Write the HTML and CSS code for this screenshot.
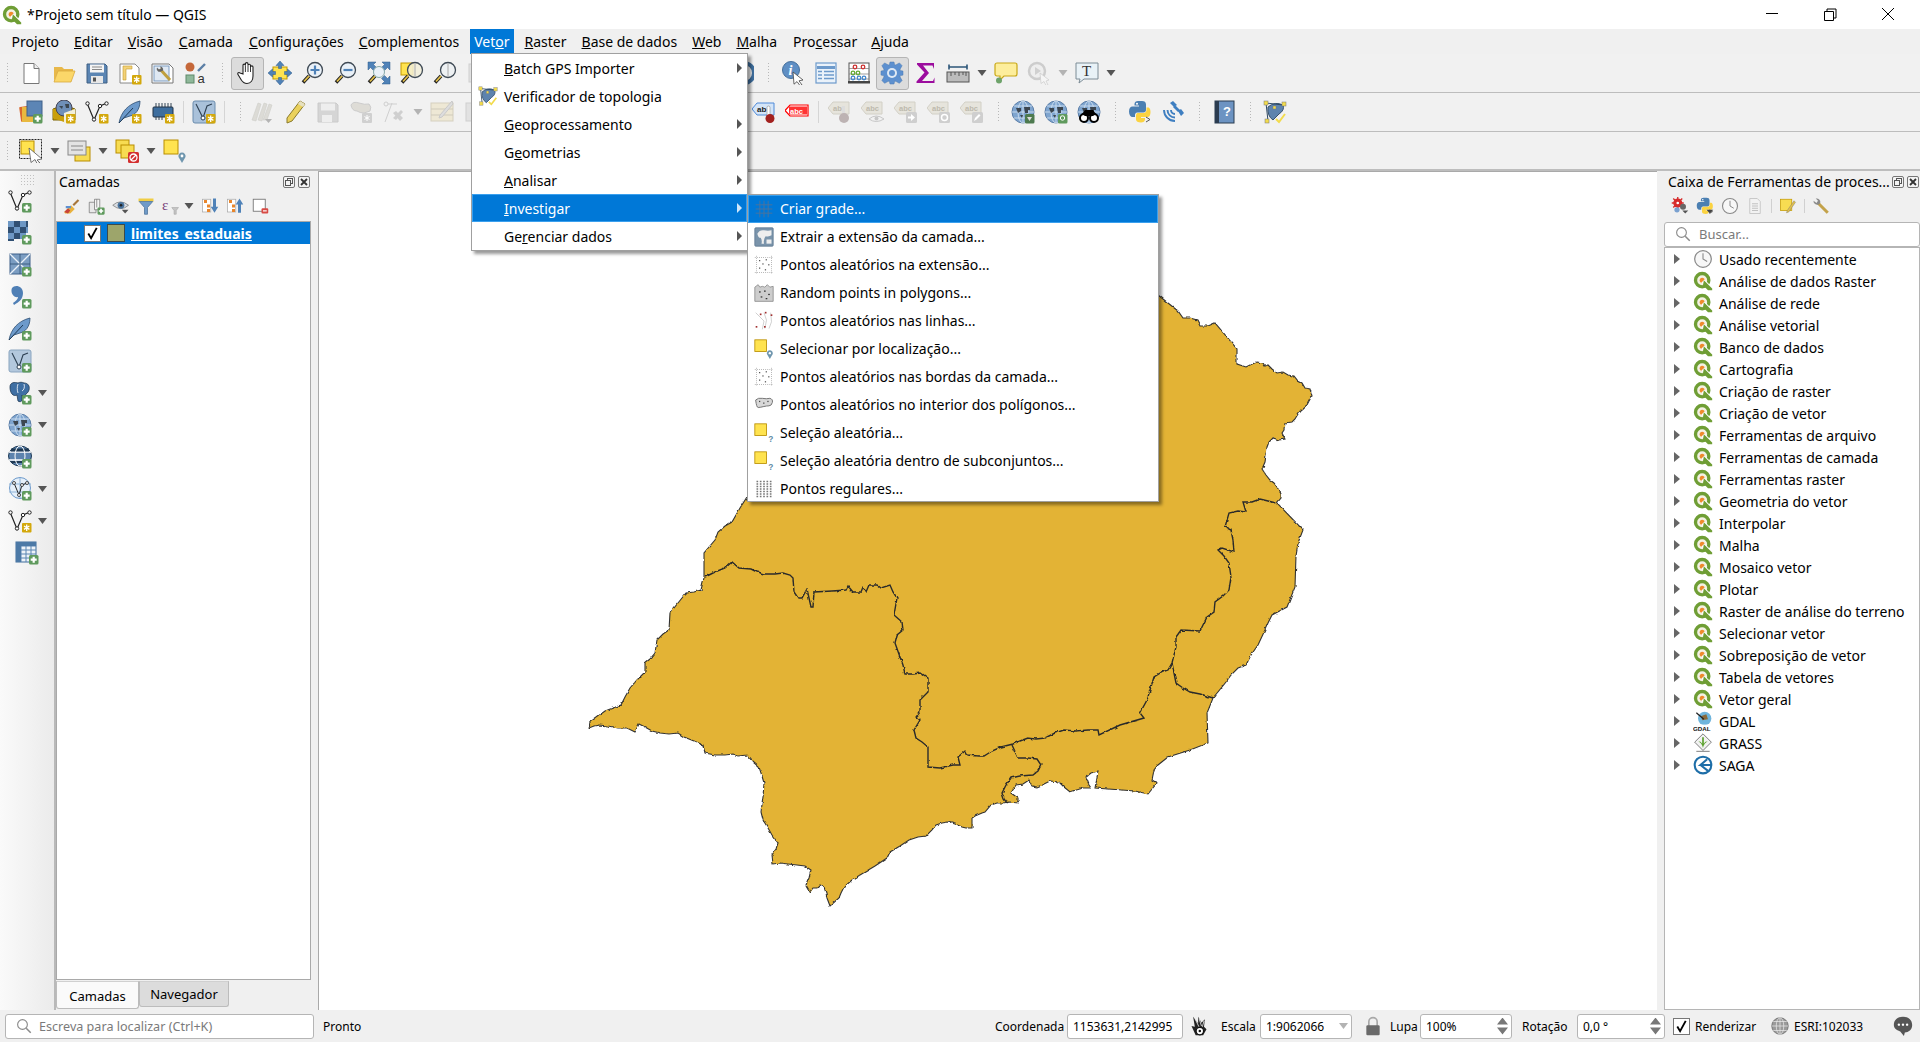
FILE: index.html
```html
<!DOCTYPE html>
<html lang="pt">
<head>
<meta charset="utf-8">
<title>*Projeto sem título — QGIS</title>
<link rel="stylesheet" href="styles.css">
</head>
<body>
<svg class="sprite" width="0" height="0">
<defs>
<symbol id="b-plus" viewBox="0 0 24 24"><rect x="14" y="14" width="9.5" height="9.5" rx="1.5" fill="#5f9a5d"/><path d="M18.7 15.7v6M15.7 18.7h6" stroke="#fff" stroke-width="2.2"/></symbol>
<symbol id="b-star" viewBox="0 0 24 24"><rect x="14" y="14" width="9.5" height="9.5" rx="1" fill="#d3a80c"/><path d="M18.7 15.5v6.4M16 17l5.4 3.4M21.4 17 16 20.4" stroke="#fff" stroke-width="1.3"/></symbol>
<symbol id="qgis" viewBox="0 0 24 24"><circle cx="11" cy="11" r="8" fill="#f3f1e4" stroke="#6f9e35" stroke-width="4"/><circle cx="11" cy="11" r="3" fill="#ee8a2c"/><path d="M12 12l9 9" stroke="#fff" stroke-width="5"/><path d="M13 11l10 10v2h-5l-6-6z" fill="#6f9e35"/></symbol>
<symbol id="new" viewBox="0 0 24 24"><path d="M5 2.5h10l5 5v15H5z" fill="#fff" stroke="#777"/><path d="M15 2.5v5h5" fill="#eee" stroke="#777"/></symbol>
<symbol id="open" viewBox="0 0 24 24"><path d="M2 6h8l2 2h9v3H6L2 20z" fill="#e8b84a"/><path d="M6 10h17l-4 11H2z" fill="#fbd769" stroke="#d9a93d" stroke-width=".8"/></symbol>
<symbol id="save" viewBox="0 0 24 24"><path d="M2 3h18l2 2v17H2z" fill="#5b85b3" stroke="#3f5f82"/><rect x="5" y="3.5" width="14" height="8" fill="#f4f4f4"/><path d="M7 6h10M7 8.500h10" stroke="#888"/><rect x="6" y="15" width="12" height="7" fill="#e8e8e8"/><rect x="8" y="16.500" width="3" height="4" fill="#555"/></symbol>
<symbol id="layoutnew" viewBox="0 0 24 24"><path d="M2 3h15l4 4v15H2z" fill="#fff" stroke="#888"/><path d="M5 5h9v3H8v11H5z" fill="#f3d27a" stroke="#c49a2c" stroke-width=".6"/><use href="#b-star"/></symbol>
<symbol id="layoutmgr" viewBox="0 0 24 24"><path d="M1 3h17l4 4v15H1z" fill="#fff" stroke="#777"/><rect x="3" y="5" width="15" height="15" fill="#dfe8f2" stroke="#7d9cc0"/><path d="M9 8l10 11" stroke="#bf9f3e" stroke-width="3"/><path d="M6 6.500a3 3 0 0 0 4 4l2-1a3 3 0 0 0-3-4l1 2-2 1z" fill="#666"/></symbol>
<symbol id="style" viewBox="0 0 24 24"><circle cx="6" cy="6" r="4.500" fill="#c5683a"/><path d="M14 10l7-7" stroke="#5c7fa6" stroke-width="2.400"/><rect x="2" y="14" width="8" height="8" fill="#8fb89a" stroke="#5f8a6a"/><text x="13.500" y="22" class="svgt">a</text></symbol>
<symbol id="pan" viewBox="0 0 24 24"><path d="M8 13V4.500c0-1.800 2.400-1.800 2.400 0V3c0-1.800 2.600-1.800 2.600 0v1.500c0-1.700 2.500-1.700 2.500 0V6c0-1.500 2.500-1.500 2.500 0v9c0 4-2 7.500-6 7.500-3 0-4.500-1.500-6-4l-3-5c-1-1.500 1-2.500 2-1.500z" fill="#fff" stroke="#222" stroke-width="1.100"/><path d="M10.400 4.500V11M13 4.500V11M15.500 6v5" stroke="#222" stroke-width=".9"/></symbol>
<symbol id="pansel" viewBox="0 0 24 24"><rect x="5" y="6" width="14" height="12" fill="#ffe34f" stroke="#c49a00"/><path d="M12 0l4 4.500h-2.500v3h-3v-3H8zM12 24l4-4.500h-2.500v-3h-3v3H8zM0 12l4.500-4v2.500h3v3h-3V16zM24 12l-4.500-4v2.500h-3v3h3V16z" fill="#4f82b8" stroke="#2f5a88" stroke-width=".5"/></symbol>
<symbol id="zoomin" viewBox="0 0 24 24"><path d="M8 15L2 21.500" stroke="#222" stroke-width="3.500"/><path d="M8 15L3 20.500" stroke="#e3c04a" stroke-width="1.800"/><circle cx="14" cy="9" r="7.500" fill="#eaf1f8" stroke="#3f4a55" stroke-width="1.300"/><path d="M14 4.500v9M9.500 9h9" stroke="#4f82b8" stroke-width="2.200"/></symbol>
<symbol id="zoomout" viewBox="0 0 24 24"><path d="M8 15L2 21.500" stroke="#222" stroke-width="3.500"/><path d="M8 15L3 20.500" stroke="#e3c04a" stroke-width="1.800"/><circle cx="14" cy="9" r="7.500" fill="#eaf1f8" stroke="#3f4a55" stroke-width="1.300"/><path d="M9.500 9h9" stroke="#4f82b8" stroke-width="2.200"/></symbol>
<symbol id="zoomfull" viewBox="0 0 24 24"><path d="M1 1h8L6.500 3.500l3 3-3 3-3-3L1 9zM23 1h-8l2.500 2.500-3 3 3 3 3-3L23 9zM23 23h-8l2.500-2.500-3-3 3-3 3 3 2.500-2.500z" fill="#4f82b8" stroke="#2f5a88" stroke-width=".5"/><path d="M8 15L2 21.500" stroke="#222" stroke-width="3.500"/><path d="M8 15L3 20.500" stroke="#e3c04a" stroke-width="1.800"/><circle cx="12" cy="11" r="5.500" fill="#eaf1f8" stroke="#8aa" stroke-width="1"/></symbol>
<symbol id="zoomlayer" viewBox="0 0 24 24"><rect x="1" y="2" width="12" height="12" fill="#ffe34f" stroke="#c49a00"/><path d="M8 15L2 21.500" stroke="#222" stroke-width="3.500"/><path d="M8 15L3 20.500" stroke="#e3c04a" stroke-width="1.800"/><circle cx="15" cy="9" r="7.500" fill="#f2efd9" fill-opacity=".85" stroke="#3f4a55" stroke-width="1.300"/><path d="M15 2v14" stroke="#aaa"/></symbol>
<symbol id="zoomsel" viewBox="0 0 24 24"><path d="M8 15L2 21.500" stroke="#222" stroke-width="3.500"/><path d="M8 15L3 20.500" stroke="#e3c04a" stroke-width="1.800"/><circle cx="15" cy="9" r="7.500" fill="#eef1f3" stroke="#3f4a55" stroke-width="1.300"/><path d="M15 2v14" stroke="#aaa"/></symbol>
<symbol id="zoomlast" viewBox="0 0 24 24"><path d="M14 2a10 10 0 0 1 0 20" fill="none" stroke="#3f6f9f" stroke-width="4"/></symbol>
<symbol id="greybox" viewBox="0 0 24 24"><rect x="3" y="3" width="18" height="18" fill="#e2e2e2" stroke="#cfcfcf"/></symbol>
<symbol id="identify" viewBox="0 0 24 24"><circle cx="10" cy="9" r="8.500" fill="#5f8fc4" stroke="#46709c"/><text x="7.500" y="14" class="svgi">i</text><path d="M12 11l10 8-4 .8 3 4.200-2 .6-3-4-3 2.600z" fill="#fff" stroke="#444" stroke-width=".8"/></symbol>
<symbol id="attrtable" viewBox="0 0 24 24"><rect x="2" y="2" width="20" height="20" fill="#eaf2fa" stroke="#6d9acb" stroke-width="1.200"/><path d="M3 6.500h18" stroke="#6d9acb" stroke-width="3"/><path d="M4 10.500h4M10 10.500h10M4 14h4M10 14h10M4 17.500h4M10 17.500h10" stroke="#6d9acb" stroke-width="1.500"/></symbol>
<symbol id="abacus" viewBox="0 0 24 24"><rect x="2" y="2" width="20" height="19" fill="#fff" stroke="#555"/><rect x="1" y="20" width="22" height="2.500" fill="#444"/><path d="M2 7.500h20M2 13h20M2 18h20" stroke="#777" stroke-width=".7"/><g fill="none" stroke-width="1.300"><circle cx="8" cy="6" r="1.800" stroke="#c33"/><circle cx="16" cy="6" r="1.800" stroke="#c33"/><circle cx="6" cy="12" r="1.800" stroke="#6a3"/><circle cx="11" cy="12" r="1.800" stroke="#6a3"/><circle cx="6" cy="17" r="1.800" stroke="#48c"/><circle cx="12" cy="17" r="1.800" stroke="#48c"/><circle cx="17" cy="17" r="1.800" stroke="#48c"/></g></symbol>
<symbol id="gear" viewBox="0 0 24 24"><path d="M10 1h4l.7 3.300 2-.9 2.700-1.500 2.700 2.800-1.600 2.800-.7 1.900 3.200.7v4l-3.200.7.700 1.900 1.600 2.800-2.700 2.800-2.700-1.500-2-.9L14 23h-4l-.7-3.100-2 .9-2.700 1.500-2.700-2.800 1.600-2.800.7-1.900L1 14.100v-4l3.200-.7-.7-1.900-1.600-2.800 2.700-2.800 2.700 1.500 2 .9z" fill="#5d90cf" stroke="#4878b0" stroke-width=".5"/><circle cx="12" cy="12" r="5" fill="#dfe9f4"/><circle cx="12" cy="12" r="3" fill="#5d90cf"/></symbol>
<symbol id="sigma" viewBox="0 0 24 24"><path d="M4 2h17v6l-1.500-3.500H10l6 7.500-7 8h11l1.500-3.500V22H3.500v-1.500l8-9L4 3.500z" fill="#9c0d9e"/></symbol>
<symbol id="measure" viewBox="0 0 24 24"><path d="M3 6h18M3 3.500v5M21 3.500v5" stroke="#2c5578" stroke-width="1.600"/><rect x="1" y="11" width="22" height="10" fill="#bcbcbc" stroke="#555"/><path d="M5 11v4M9 11v3M13 11v4M17 11v3M20 11v4" stroke="#555"/></symbol>
<symbol id="note" viewBox="0 0 24 24"><path d="M3 2h18a2 2 0 0 1 2 2v9a2 2 0 0 1-2 2H10l-4 4 0-4H3a2 2 0 0 1-2-2V4a2 2 0 0 1 2-2z" fill="#fdee9c" stroke="#c9a816" stroke-width="1.200"/><circle cx="5" cy="19.500" r="3" fill="#6ea36a"/></symbol>
<symbol id="greyrun" viewBox="0 0 24 24"><circle cx="10" cy="10" r="8" fill="#eee" stroke="#cdcdcd" stroke-width="2.500"/><path d="M8 6l6 4-6 4z" fill="#d0d0d0"/><path d="M13 12l9 7-3 1 2 4-2 .5-2-4-3 2z" fill="#f5f5f5" stroke="#ccc" stroke-width=".7"/></symbol>
<symbol id="textnote" viewBox="0 0 24 24"><path d="M1 2h22v16H9l-5 4 1-4H1z" fill="#e9f2f7" stroke="#7d8c96"/><text x="7" y="15" class="svgT">T</text></symbol>
<symbol id="abpin" viewBox="0 0 24 24"><path d="M5 3h17v12H5L0 9z" fill="#d4e5f8" stroke="#4f8ad8"/><text x="5" y="12" class="svgb">ab</text><rect x="15" y="6" width="3" height="10" rx="1.500" fill="#fff" stroke="#888" stroke-width=".6"/><circle cx="18" cy="18.500" r="4.500" fill="#a3211f"/></symbol>
<symbol id="abcred" viewBox="0 0 24 24"><path d="M5 5h18v11H5L0 10.500z" fill="#fff" stroke="#f00" stroke-width="1.200"/><rect x="4" y="6.500" width="18" height="8" fill="#f33"/><text x="5" y="14" class="svgw">abc</text></symbol>
<symbol id="g-ab" viewBox="0 0 24 24"><path d="M5 2h16v12H5L0 8z" fill="#e6e4dc" stroke="#d2d0c6"/><text x="5" y="11" class="svgg">ab</text><rect x="14" y="6" width="3" height="9" fill="#ddd"/><circle cx="16" cy="18" r="5" fill="#bdb3b3"/></symbol>
<symbol id="g-eye" viewBox="0 0 24 24"><path d="M5 2h16v12H5L0 8z" fill="#e6e4dc" stroke="#d2d0c6"/><text x="5" y="11" class="svgg">abc</text><path d="M8 19q7-6 15 0-8 5-15 0z" fill="#f2f2f2" stroke="#c7c7c7"/><circle cx="15.500" cy="18.500" r="2" fill="#c7c7c7"/></symbol>
<symbol id="g-arrow" viewBox="0 0 24 24"><path d="M5 2h16v12H5L0 8z" fill="#e6e4dc" stroke="#d2d0c6"/><text x="5" y="11" class="svgg">abc</text><rect x="12" y="12" width="11" height="11" rx="1.500" fill="#cfcfcf"/><path d="M14 16.500h3V14l4 3.500-4 3.500v-2.500h-3z" fill="#fff"/></symbol>
<symbol id="g-rot" viewBox="0 0 24 24"><path d="M5 2h16v12H5L0 8z" fill="#e6e4dc" stroke="#d2d0c6"/><text x="5" y="11" class="svgg">abc</text><rect x="12" y="12" width="11" height="11" rx="1.500" fill="#cfcfcf"/><circle cx="17.500" cy="17.500" r="3" fill="none" stroke="#fff" stroke-width="1.500"/></symbol>
<symbol id="g-pen" viewBox="0 0 24 24"><path d="M5 2h16v12H5L0 8z" fill="#e6e4dc" stroke="#d2d0c6"/><text x="5" y="11" class="svgg">abc</text><rect x="12" y="12" width="11" height="11" rx="1.500" fill="#cfcfcf"/><path d="M14 21l1-3 4-4 1.500 1.500-4 4z" fill="#fff"/></symbol>
<symbol id="globe" viewBox="0 0 24 24"><circle cx="12" cy="12" r="11" fill="#7fa5cf" stroke="#5b7ea8"/><path d="M1 12h22M12 1v22M3 6h18M3 18h18" stroke="#cfe0f0" stroke-width=".9"/><ellipse cx="12" cy="12" rx="5" ry="11" fill="none" stroke="#cfe0f0" stroke-width=".9"/><path d="M5 8h5v3l-3 2zM13 7h6v3h-2v3h-3zM9 15h3l-1 3z" fill="#3c4650"/></symbol>
<symbol id="globeadd" viewBox="0 0 24 24"><use href="#globe"/><rect x="14" y="14" width="9.500" height="9.500" rx="1.500" fill="#4d7a4f"/><path d="M16 17h5l-2.500 4z" fill="#ddd"/></symbol>
<symbol id="globesearch" viewBox="0 0 24 24"><use href="#globe"/><rect x="14" y="14" width="9.500" height="9.500" rx="1.500" fill="#5f9a5d"/><circle cx="18.500" cy="18" r="2.200" fill="none" stroke="#fff"/></symbol>
<symbol id="globebino" viewBox="0 0 24 24"><use href="#globe"/><circle cx="7" cy="18" r="4" fill="#fff" stroke="#000" stroke-width="2"/><circle cx="17" cy="18" r="4" fill="#fff" stroke="#000" stroke-width="2"/><path d="M5 14l3-4h8l3 4-3 2H8z" fill="#000"/></symbol>
<symbol id="python" viewBox="0 0 24 24"><path d="M10 1h4c2.500 0 4 1 4 3.500V10c0 1.500-1 2.500-2.500 2.500h-6C7.500 12.500 7 14 7 15v2H4.500C2.500 17 1 15 1 11.500 1 8 2.500 6.500 4.500 6.500H11V5.500H6.500V4C6.500 2 8 1 10 1z" fill="#4b7fb2"/><circle cx="9" cy="3.700" r="1" fill="#fff"/><path d="M9.500 13h6c1.500 0 3-1 3-3V7.500h1.500c2 0 2.500 2.500 2.500 4.500 0 3-1 5-3 5H13v1h4v1.500c0 2-2 3-4 3-3 0-5-1-5-3v-4c0-1 .5-2.500 1.500-2.500z" fill="#fbd341"/><path d="M18 17l4 2.500-4 2.500" fill="none" stroke="#555"/></symbol>
<symbol id="sat" viewBox="0 0 24 24"><path d="M3 10a11 11 0 0 0 11 11M6.500 10a7.500 7.500 0 0 0 7.500 7.500M10 10a4 4 0 0 0 4 4" fill="none" stroke="#3f7fc1" stroke-width="1.900"/><path d="M9 3l3-2 4 4-3 2zM17 11l3-2 3 4-3 3zM12 7l2-2 5 5-2 2z" fill="#3f7fc1"/></symbol>
<symbol id="help" viewBox="0 0 24 24"><rect x="3" y="1" width="19" height="22" fill="#6c93c2" stroke="#2b3c50"/><rect x="3" y="1" width="4" height="22" fill="#2b3c50"/><text x="11" y="16" class="svgq">?</text></symbol>
<symbol id="topo" viewBox="0 0 24 24"><path d="M5 7q7-6 15-2 2 5-4 9l-6 6q-6-4-5-13z" fill="#5d83ae" stroke="#37526f"/><path d="M3 3l17 2M3 3l2 18" stroke="#2f4a66"/><g fill="#f2db4d" stroke="#777" stroke-width=".5"><rect x="1" y="1" width="4" height="4"/><rect x="19" y="2" width="4" height="4"/><rect x="10" y="6" width="3" height="3"/><rect x="2" y="19" width="4" height="4"/></g><path d="M13 19l3 3 6-8" fill="none" stroke="#f2db4d" stroke-width="2"/></symbol>
<symbol id="addlayers" viewBox="0 0 24 24"><rect x="1" y="6" width="14" height="15" rx="1" fill="#d9682e" transform="rotate(-8 8 13)"/><rect x="3" y="7" width="14" height="15" fill="#e8b93f"/><rect x="8" y="1" width="15" height="15" fill="#5c85b5" stroke="#3f618a"/><use href="#b-plus"/></symbol>
<symbol id="gpkg" viewBox="0 0 24 24"><path d="M1 9l11-4 11 4v11H1z" fill="#d3a80c" stroke="#7a6200"/><path d="M1 9l11 4v9L1 18z" fill="#c99f0b"/><circle cx="12" cy="8" r="8" fill="#6f8fb8" stroke="#445"/><path d="M7 6h4l-1 3zM13 4h4v4h-3z" fill="#3c4650"/><path d="M12 13l11-4v11l-11 3z" fill="#f2efd9"/><use href="#b-star"/></symbol>
<symbol id="vnew" viewBox="0 0 24 24"><path d="M2 3l7 17 6-14 7-3" fill="none" stroke="#222" stroke-width="1.200"/><g fill="#fff" stroke="#222"><circle cx="2.500" cy="3.500" r="1.700"/><circle cx="9" cy="19.500" r="1.700"/><circle cx="15" cy="6" r="1.700"/><circle cx="21.500" cy="3.500" r="1.700"/></g><use href="#b-star"/></symbol>
<symbol id="vadd" viewBox="0 0 24 24"><path d="M2 3l7 17 6-14 7-3" fill="none" stroke="#222" stroke-width="1.200"/><g fill="#fff" stroke="#222"><circle cx="2.500" cy="3.500" r="1.700"/><circle cx="9" cy="19.500" r="1.700"/><circle cx="15" cy="6" r="1.700"/><circle cx="21.500" cy="3.500" r="1.700"/></g><use href="#b-plus"/></symbol>
<symbol id="feathernew" viewBox="0 0 24 24"><path d="M1 23C3 12 10 4 22 1c0 9-5 14-10 15l-6 2z" fill="#6d9acb" stroke="#2f4f72" stroke-width=".8"/><path d="M1 23 15 8" stroke="#1f3a55"/><use href="#b-star"/></symbol>
<symbol id="featheradd" viewBox="0 0 24 24"><path d="M1 23C3 12 10 4 22 1c0 9-5 14-10 15l-6 2z" fill="#6d9acb" stroke="#2f4f72" stroke-width=".8"/><path d="M1 23 15 8" stroke="#1f3a55"/><use href="#b-plus"/></symbol>
<symbol id="chip" viewBox="0 0 24 24"><path d="M5 3v4M8 3v4M11 3v4M14 3v4M17 3v4M20 3v4" stroke="#345"/><rect x="2" y="7" width="20" height="10" rx="1" fill="#3e6e9e" stroke="#234"/><path d="M5 17v3M8 17v3M11 17v3" stroke="#345"/><use href="#b-star"/></symbol>
<symbol id="meshnew" viewBox="0 0 24 24"><rect x="1" y="1" width="22" height="22" rx="2" fill="#a9c1da" stroke="#6a8cad"/><path d="M4 4l7 14 4-12 5-2" fill="none" stroke="#2e4052" stroke-width="1.100"/><circle cx="11" cy="18" r="2" fill="#fff" stroke="#2e4052"/><use href="#b-star"/></symbol>
<symbol id="meshadd" viewBox="0 0 24 24"><rect x="1" y="1" width="22" height="22" rx="2" fill="#b3c8dd" stroke="#8aa5bf"/><path d="M4 4l7 14 4-12 5-2" fill="none" stroke="#2e4052" stroke-width="1.100"/><circle cx="11" cy="18" r="2" fill="#fff" stroke="#2e4052"/><use href="#b-plus"/></symbol>
<symbol id="meshtri" viewBox="0 0 24 24"><rect x="2" y="1" width="20" height="20" fill="#7b9dc2" stroke="#3f618a"/><path d="M2 1l10 10L22 1M2 21l10-10 10 10" fill="none" stroke="#eaf1f8" stroke-width="1.300"/><path d="M2 11h20M12 1v20" stroke="#2f4f72" stroke-width=".8"/><use href="#b-plus"/></symbol>
<symbol id="g-pencils" viewBox="0 0 24 24"><path d="M2 20L8 3l3 1-5 17zM8 20L14 3l3 1-5 17zM13 20L19 4l3 1-5 15z" fill="#dcdbd6" stroke="#cfcfc9" stroke-width=".6"/><path d="M15 19h7l-3.500 4z" fill="#b4b4b4"/></symbol>
<symbol id="pencil" viewBox="0 0 24 24"><path d="M17 1l5 3L9 21l-5 2 0-5z" fill="#ead15c" stroke="#8a7a2c"/><path d="M17 1l5 3-2 3-5-3z" fill="#e6e0c0"/></symbol>
<symbol id="g-save" viewBox="0 0 24 24"><path d="M2 3h18l2 2v17H2z" fill="#d5d5d5" stroke="#cacaca"/><rect x="5" y="3.500" width="14" height="7" fill="#eee"/><rect x="6" y="15" width="10" height="7" fill="#eee"/></symbol>
<symbol id="g-shape" viewBox="0 0 24 24"><path d="M2 5q2-4 8-2t10 1q3 3 1 7l-6 2q-4 0-7-2-5 0-6-6z" fill="#dedcd6" stroke="#ccc"/><rect x="13" y="13" width="10" height="10" rx="1" fill="#d0d0d0"/><path d="M18 15v6M15.500 16.500l5 3M20.500 16.500l-5 3" stroke="#fff"/></symbol>
<symbol id="g-tool" viewBox="0 0 24 24"><path d="M3 22L10 3M6 4h9M3 4" stroke="#cfcfcf" fill="none"/><circle cx="4" cy="4" r="2" fill="none" stroke="#cfcfcf"/><path d="M11 13l7 8 3-3-7-7zM14 20l7-8-2-2-8 8z" fill="#cfcfcf"/></symbol>
<symbol id="g-form" viewBox="0 0 24 24"><rect x="1" y="3" width="22" height="18" fill="#eee8d5" stroke="#d5d0bf"/><path d="M1 9h22M1 15h22" stroke="#cfcabb"/><path d="M22 1l1 3L12 17l-3 1 1-3z" fill="#ddd" stroke="#c9c9c9"/></symbol>
<symbol id="select" viewBox="0 0 24 24"><rect x="0.500" y="0.500" width="22" height="19" fill="none" stroke="#222" stroke-dasharray="2 1"/><rect x="2" y="2" width="13" height="13" fill="#ffe34f" stroke="#b98e00"/><path d="M10 9l13 11-5 1 3 3-3 .5-2-4-4 3z" fill="#fff" stroke="#555" stroke-width=".8"/></symbol>
<symbol id="selattr" viewBox="0 0 24 24"><rect x="8" y="8" width="15" height="14" fill="#f7dc52" stroke="#b98e00"/><rect x="1" y="2" width="18" height="14" fill="#e3e3e3" stroke="#888"/><path d="M4 7h12M4 11h12" stroke="#888" stroke-width="1.200"/></symbol>
<symbol id="desel" viewBox="0 0 24 24"><rect x="1" y="1" width="13" height="13" fill="#f7dc52" stroke="#b98e00"/><rect x="6" y="6" width="13" height="13" fill="#f7dc52" stroke="#b98e00"/><rect x="13" y="13" width="11" height="11" rx="1.500" fill="#d32f2f"/><circle cx="18.500" cy="18.500" r="3.500" fill="none" stroke="#fff" stroke-width="1.300"/><path d="M16 21l5-5" stroke="#fff" stroke-width="1.300"/></symbol>
<symbol id="selloc" viewBox="0 0 24 24"><rect x="1" y="1" width="14" height="14" fill="#ffe34f" stroke="#b98e00"/><path d="M19 24l-3.500-6a3.600 3.600 0 1 1 7 0z" fill="#6f96ae"/><circle cx="19" cy="17" r="1.400" fill="#fff"/></symbol>
<symbol id="selrand" viewBox="0 0 24 24"><rect x="1" y="1" width="14" height="14" fill="#ffe34f" stroke="#b98e00"/><text x="17" y="23" class="svgp">?</text></symbol>
<symbol id="style2" viewBox="0 0 24 24"><path d="M3 20l9-9 5 5-6 6H4z" fill="#e9b23d"/><path d="M3 20l5-5 3 3-3 4z" fill="#c9433a"/><path d="M14 10l7-7 2 2-7 7z" fill="#a7763a"/><path d="M5 12h7v3H5z" fill="#5d90cf"/></symbol>
<symbol id="addgroup" viewBox="0 0 24 24"><path d="M3 7h9v14H3z" fill="#e8e8e8" stroke="#777"/><path d="M10 3h7v14h-7z" fill="#f4f4f4" stroke="#777"/><path d="M13 3v11" stroke="#777"/><use href="#b-plus"/></symbol>
<symbol id="eye" viewBox="0 0 24 24"><path d="M1 11q10-9 21 0-10 9-21 0z" fill="#d9dde2" stroke="#777"/><circle cx="12" cy="11" r="4.500" fill="#48729c"/><circle cx="12" cy="11" r="1.800" fill="#222"/><path d="M13 17h9l-4.500 5z" fill="#555"/></symbol>
<symbol id="funnel" viewBox="0 0 24 24"><rect x="2" y="2" width="20" height="4" fill="#f0cd45"/><path d="M3 6h18l-7 8v9h-4v-9z" fill="#6f9ac8" stroke="#4b7199"/></symbol>
<symbol id="epsilon" viewBox="0 0 24 24"><text x="0" y="17" class="svge">ε</text><path d="M13 14h9l-3 4v5h-3v-5z" fill="#c4c4c4" stroke="#999" stroke-width=".6"/></symbol>
<symbol id="expand" viewBox="0 0 24 24"><rect x="2" y="3" width="11" height="17" fill="#fff" stroke="#aaa"/><g fill="#e9862b"><rect x="4" y="4" width="4" height="4"/><rect x="8" y="10" width="4" height="4"/><rect x="8" y="16" width="4" height="4"/></g><path d="M16 2h4v11h3l-5 8-5-8h3z" fill="#4f82b8"/></symbol>
<symbol id="collapse" viewBox="0 0 24 24"><rect x="2" y="3" width="11" height="17" fill="#fff" stroke="#aaa"/><g fill="#e9862b"><rect x="4" y="4" width="4" height="4"/><rect x="8" y="10" width="4" height="4"/><rect x="8" y="16" width="4" height="4"/></g><path d="M16 21h4V10h3l-5-8-5 8h3z" fill="#4f82b8"/></symbol>
<symbol id="removelayer" viewBox="0 0 24 24"><rect x="3" y="3" width="16" height="16" fill="#fff" stroke="#777" stroke-width="1.200"/><rect x="14" y="15" width="9" height="7" rx="1.500" fill="#d84b45"/><path d="M16 18.500h5" stroke="#fff" stroke-width="1.600"/></symbol>
<symbol id="raster" viewBox="0 0 24 24"><g fill="#304f72"><rect x="6" y="0" width="6" height="6"/><rect x="18" y="0" width="2" height="6"/><rect x="0" y="6" width="6" height="6"/><rect x="12" y="6" width="6" height="6"/><rect x="6" y="12" width="6" height="6"/><rect x="0" y="18" width="6" height="2"/></g><g fill="#6d97c4"><rect x="0" y="0" width="6" height="6"/><rect x="12" y="0" width="6" height="6"/><rect x="6" y="6" width="6" height="6"/><rect x="18" y="6" width="2" height="6"/><rect x="0" y="12" width="6" height="6"/><rect x="12" y="12" width="6" height="6"/></g><use href="#b-plus"/></symbol>
<symbol id="comma" viewBox="0 0 24 24"><path d="M4 3c3-4 11-2 11 5 0 6-4 9-9 12l-1-2c3-2 5-4 5-6-4 1-8-4-6-9z" fill="#4f7fb5"/><use href="#b-plus"/></symbol>
<symbol id="pg" viewBox="0 0 24 24"><path d="M2 6c0-5 5-5 8-4 2-1 4-1 6 0 4 0 6 3 5 7-1 3-3 4-4 5l1 2h-3l-1-2v5c0 2-3 2-4 1l-1-6c-4 2-7-2-7-8z" fill="#3f6fa3" stroke="#1f3a55" stroke-width=".8"/><path d="M10 3c-1 3-1 6 0 9M16 3c1 3 0 6-2 7" fill="none" stroke="#fff" stroke-width=".8"/><use href="#b-plus"/></symbol>
<symbol id="wms" viewBox="0 0 24 24"><use href="#globe"/><use href="#b-plus"/></symbol>
<symbol id="xyz" viewBox="0 0 24 24"><ellipse cx="12" cy="11" rx="11.500" ry="10" fill="#5c83ae" stroke="#1f3a55"/><path d="M1 7h22M1 15h22" stroke="#fff" stroke-width="1.500"/><path d="M3 5h18" stroke="#1f3a55" stroke-width="3"/><path d="M3 17h18" stroke="#1f3a55" stroke-width="2"/><ellipse cx="12" cy="11" rx="5" ry="10" fill="none" stroke="#fff"/><use href="#b-plus"/></symbol>
<symbol id="wfs" viewBox="0 0 24 24"><circle cx="12" cy="11" r="10.500" fill="#e6f0fa" stroke="#6d9acb"/><path d="M1 7h22M1 15h22M12 1v20" stroke="#8fb4d8"/><path d="M6 6l5 12 3-10 5-2" fill="none" stroke="#222"/><g fill="#fff" stroke="#222" stroke-width=".8"><circle cx="6" cy="6" r="1.500"/><circle cx="11" cy="18" r="1.500"/><circle cx="14" cy="8" r="1.500"/><circle cx="19" cy="6" r="1.500"/></g><use href="#b-plus"/></symbol>
<symbol id="tableadd" viewBox="0 0 24 24"><rect x="1" y="1" width="20" height="20" fill="#eef3f8" stroke="#3f6d9c"/><path d="M1 5h20M1 9h20M1 13h20M1 17h20M6 1v20M11 1v20M16 1v20" stroke="#5a86b3"/><rect x="1" y="1" width="5" height="20" fill="#4c79a6"/><rect x="1" y="1" width="20" height="4" fill="#4c79a6"/><use href="#b-plus"/></symbol>
<symbol id="clock" viewBox="0 0 24 24"><circle cx="12" cy="12" r="10" fill="#f7f7f7" stroke="#8a8a8a" stroke-width="1.500"/><path d="M12 5v7l5 3" fill="none" stroke="#8a8a8a" stroke-width="1.300"/></symbol>
<symbol id="algs" viewBox="0 0 24 24"><circle cx="9" cy="8" r="6" fill="#d62c2c"/><path d="M9 0v16M1 8h16M3 2l12 12M15 2L3 14" stroke="#d62c2c" stroke-width="1.800"/><circle cx="9" cy="8" r="1.800" fill="#fff"/><circle cx="16" cy="13" r="4" fill="#666"/><circle cx="8" cy="17" r="3.500" fill="#7aa1d0"/><path d="M15 18h8l-4 4z" fill="#555"/></symbol>
<symbol id="pydrop" viewBox="0 0 24 24"><use href="#python"/><path d="M14 17h9l-4.500 5z" fill="#444"/></symbol>
<symbol id="docgrey" viewBox="0 0 24 24"><path d="M5 2h10l4 4v16H5z" fill="#f2f2f2" stroke="#bbb"/><path d="M8 9h8M8 12h8M8 15h8M8 18h8" stroke="#bbb" stroke-width="1.200"/></symbol>
<symbol id="editsel" viewBox="0 0 24 24"><rect x="2" y="3" width="15" height="15" fill="#f7dc52" stroke="#c49a00"/><path d="M20 5l2 2-9 13-3 1 1-3z" fill="#e3c04a" stroke="#777" stroke-width=".6"/></symbol>
<symbol id="wrench" viewBox="0 0 24 24"><path d="M8 8l13 13" stroke="#c3a24a" stroke-width="4"/><path d="M2 5a5 5 0 0 0 7 5l2-2a5 5 0 0 0-6-6l3 3-2 3z" fill="#8a8a8a"/></symbol>
<symbol id="mag" viewBox="0 0 24 24"><circle cx="10" cy="10" r="6.500" fill="none" stroke="#8a8a8a" stroke-width="1.500"/><path d="M15 15l6 6" stroke="#8a8a8a" stroke-width="2"/></symbol>
<symbol id="gdal" viewBox="0 0 24 24"><circle cx="14" cy="9" r="8" fill="#6fb5dc"/><path d="M10 6l6-2 2 6-7 1z" fill="#8a6a3a"/><path d="M4 2l9 8" stroke="#222" stroke-width="1.500"/><rect x="0" y="16" width="24" height="8" fill="#fff" fill-opacity=".6"/><text x="0" y="23.500" class="svgd">GDAL</text></symbol>
<symbol id="grass" viewBox="0 0 24 24"><path d="M12 1l10 10-10 10L2 11z" fill="#f2f2f2" stroke="#666"/><path d="M12 18c-1-5-4-7-6-8 2 0 4 1 5 3V5h2v8c1-2 3-3 5-3-2 1-5 3-6 8z" fill="#5aa02c"/><path d="M4 22h16" stroke="#666"/></symbol>
<symbol id="saga" viewBox="0 0 24 24"><circle cx="12" cy="12" r="10" fill="#fff" stroke="#1e6ea8" stroke-width="2.500"/><path d="M22 12H9l8-7M9 12l9 7" fill="none" stroke="#1e6ea8" stroke-width="2.500"/></symbol>
<symbol id="ic-grid" viewBox="0 0 24 24"><path d="M2 7h20M2 12h20M2 17h20M7 2v20M12 2v20M17 2v20" stroke="#4f7399" stroke-width="1.100"/></symbol>
<symbol id="ic-extent" viewBox="0 0 24 24"><rect x="1" y="1" width="22" height="22" rx="1" fill="#7a94ab" stroke="#5f7a91"/><path d="M4 8q3-5 8-4t9 0v6q-3 2-7 1-3 3-2 9H9q1-4-1-7-3 0-4-5z" fill="#eee"/><path d="M15 15h6v5h-6z" fill="#eee"/></symbol>
<symbol id="ic-dots" viewBox="0 0 24 24"><g stroke="#9a9a9a" stroke-dasharray="1 1.500"><path d="M1 3h22M1 21h22M3 1v22M21 1v22"/></g><g fill="#555"><rect x="6" y="6" width="1.500" height="1.500"/><rect x="14" y="5" width="1.500" height="1.500"/><rect x="10" y="10" width="1.500" height="1.500"/><rect x="17" y="11" width="1.500" height="1.500"/><rect x="6" y="15" width="1.500" height="1.500"/><rect x="13" y="17" width="1.500" height="1.500"/></g></symbol>
<symbol id="ic-rpoly" viewBox="0 0 24 24"><path d="M1 5l4-3 2 3 3-1 3 1 3-3 3 3 4-1v18H1z" fill="#cdcdcd" stroke="#8a8a8a"/><g fill="#333"><rect x="6" y="10" width="2" height="1.500"/><rect x="12" y="9" width="2" height="1.500"/><rect x="17" y="13" width="2" height="1.500"/><rect x="8" y="16" width="2" height="1.500"/><rect x="14" y="18" width="2" height="1.500"/></g></symbol>
<symbol id="ic-rlines" viewBox="0 0 24 24"><path d="M2 2l10 10-2 10M12 2l3 9-2 10M20 2l1 11-3 8" fill="none" stroke="#c8c8c8"/><g fill="#a23030"><rect x="7" y="3" width="2" height="2"/><rect x="13" y="1" width="2" height="2"/><rect x="20" y="4" width="2" height="2"/><rect x="2" y="18" width="2" height="2"/><rect x="12" y="18" width="2" height="2"/></g></symbol>
<symbol id="ic-pipoly" viewBox="0 0 24 24"><path d="M2 6q3-3 8-2t9 0q4 1 3 5t-4 4-7 1-6 1-3-9z" fill="#d8d8d8" stroke="#777" stroke-width="1.200"/><g fill="#444"><rect x="6" y="7" width="1.500" height="1.500"/><rect x="11" y="9" width="1.500" height="1.500"/><rect x="16" y="7" width="1.500" height="1.500"/></g></symbol>
<symbol id="ic-reg" viewBox="0 0 24 24"><path d="M4 2v20M8 2v20M12 2v20M16 2v20M20 2v20" stroke="#777" stroke-width="2" stroke-dasharray="2 1"/></symbol>
<symbol id="float" viewBox="0 0 12 12"><rect x=".5" y=".5" width="11" height="11" rx="1.500" fill="#f4f4f4" stroke="#777"/><rect x="4.500" y="2.500" width="5" height="5" fill="none" stroke="#555"/><rect x="2.500" y="4.500" width="5" height="5" fill="#f4f4f4" stroke="#555"/></symbol>
<symbol id="close" viewBox="0 0 12 12"><rect x=".5" y=".5" width="11" height="11" rx="1.500" fill="#f4f4f4" stroke="#777"/><path d="M3 3l6 6M9 3L3 9" stroke="#333" stroke-width="1.800"/></symbol>
<symbol id="lock" viewBox="0 0 24 24"><path d="M7 12V7a5 5 0 0 1 10 0v5" fill="none" stroke="#a8a8a8" stroke-width="2"/><rect x="4" y="11" width="16" height="12" rx="1.500" fill="#6a6a6a"/></symbol>
<symbol id="crs" viewBox="0 0 24 24"><circle cx="12" cy="12" r="11" fill="#9a9a9a" stroke="#666"/><path d="M1 12h22M12 1v22M3 6h18M3 18h18" stroke="#eee" stroke-width=".9"/><ellipse cx="12" cy="12" rx="5" ry="11" fill="none" stroke="#eee" stroke-width=".9"/></symbol>
<symbol id="msg" viewBox="0 0 24 24"><path d="M12 2c6 0 10 3.500 10 9s-4 8-8 8l-1 4-4-5c-3-1-7-3-7-7 0-5.500 4-9 10-9z" fill="#555"/><g fill="#fff"><circle cx="7.500" cy="10.500" r="1.300"/><circle cx="12" cy="10.500" r="1.300"/><circle cx="16.500" cy="10.500" r="1.300"/></g></symbol>
<symbol id="wand" viewBox="0 0 24 24"><path d="M5 1l6 8 0-8 4 7 4-4-1 9 3 3-4 7H8L3 12l4 1z" fill="#222"/><path d="M7 3l5 10M12 3l3 9M18 6l-2 7" stroke="#eee"/><circle cx="13" cy="18" r="4.500" fill="#fff" stroke="#111" stroke-width="1.500"/><circle cx="13" cy="18" r="1.500" fill="#111"/></symbol>
</defs>
</svg>

<div class="app">
<header class="titlebar">
<svg class="i-logo"><use href="#qgis"/></svg>
<span class="title-text">*Projeto sem título — QGIS</span>
<div class="winctl">
<svg class="wbtn" viewBox="0 0 58 29"><path d="M23 13.500h12" stroke="#000"/></svg>
<svg class="wbtn" viewBox="0 0 58 29"><path d="M23.500 11.500h9v9h-9zM26 11.500V9h9v9h-2.500" fill="none" stroke="#000"/></svg>
<svg class="wbtn" viewBox="0 0 58 29"><path d="M23 8l12 12M35 8 23 20" stroke="#000"/></svg>
</div>
</header>

<nav class="menubar">
<span class="mi">Pro<u>j</u>eto</span><span class="mi"><u>E</u>ditar</span><span class="mi"><u>V</u>isão</span><span class="mi"><u>C</u>amada</span><span class="mi"><u>C</u>onfigurações</span><span class="mi"><u>C</u>omplementos</span><span class="mi mi-on">Vet<u>o</u>r</span><span class="mi"><u>R</u>aster</span><span class="mi"><u>B</u>ase de dados</span><span class="mi"><u>W</u>eb</span><span class="mi"><u>M</u>alha</span><span class="mi">Pro<u>c</u>essar</span><span class="mi"><u>A</u>juda</span>
</nav>

<div class="tb">
<i class="grip"></i>
<b class="btn"><svg class="ic"><use href="#new"/></svg></b><b class="btn"><svg class="ic"><use href="#open"/></svg></b><b class="btn"><svg class="ic"><use href="#save"/></svg></b><b class="btn"><svg class="ic"><use href="#layoutnew"/></svg></b><b class="btn"><svg class="ic"><use href="#layoutmgr"/></svg></b><b class="btn"><svg class="ic"><use href="#style"/></svg></b>
<i class="grip g2"></i>
<b class="btn on"><svg class="ic"><use href="#pan"/></svg></b><b class="btn"><svg class="ic"><use href="#pansel"/></svg></b><b class="btn"><svg class="ic"><use href="#zoomin"/></svg></b><b class="btn"><svg class="ic"><use href="#zoomout"/></svg></b><b class="btn"><svg class="ic"><use href="#zoomfull"/></svg></b><b class="btn"><svg class="ic"><use href="#zoomlayer"/></svg></b><b class="btn"><svg class="ic"><use href="#zoomsel"/></svg></b><b class="btn"><svg class="ic"><use href="#greybox"/></svg></b>
<span class="sp-a"></span>
<b class="btn"><svg class="ic"><use href="#zoomlast"/></svg></b>
<i class="grip g2"></i>
<b class="btn"><svg class="ic"><use href="#identify"/></svg></b><b class="btn"><svg class="ic"><use href="#attrtable"/></svg></b><b class="btn"><svg class="ic"><use href="#abacus"/></svg></b><b class="btn on"><svg class="ic"><use href="#gear"/></svg></b><b class="btn"><svg class="ic"><use href="#sigma"/></svg></b><b class="btn"><svg class="ic"><use href="#measure"/></svg></b><i class="arr"></i><b class="btn"><svg class="ic"><use href="#note"/></svg></b><b class="btn"><svg class="ic"><use href="#greyrun"/></svg></b><i class="arr off"></i><b class="btn"><svg class="ic"><use href="#textnote"/></svg></b><i class="arr"></i>
</div>

<div class="tb">
<i class="grip"></i>
<b class="btn"><svg class="ic"><use href="#addlayers"/></svg></b><b class="btn"><svg class="ic"><use href="#gpkg"/></svg></b><b class="btn"><svg class="ic"><use href="#vnew"/></svg></b><b class="btn"><svg class="ic"><use href="#feathernew"/></svg></b><b class="btn"><svg class="ic"><use href="#chip"/></svg></b>
<i class="sep"></i>
<b class="btn"><svg class="ic"><use href="#meshnew"/></svg></b>
<i class="sep"></i><i class="grip g3"></i>
<b class="btn"><svg class="ic"><use href="#g-pencils"/></svg></b><b class="btn"><svg class="ic"><use href="#pencil"/></svg></b><b class="btn"><svg class="ic"><use href="#g-save"/></svg></b><b class="btn"><svg class="ic"><use href="#g-shape"/></svg></b><b class="btn"><svg class="ic"><use href="#g-tool"/></svg></b><i class="arr off"></i><b class="btn"><svg class="ic"><use href="#g-form"/></svg></b><b class="btn"><svg class="ic"><use href="#greybox"/></svg></b>
<span class="sp-b"></span>
<b class="btn"><svg class="ic"><use href="#abpin"/></svg></b><b class="btn"><svg class="ic"><use href="#abcred"/></svg></b>
<i class="sep sep-w"></i>
<b class="btn"><svg class="ic"><use href="#g-ab"/></svg></b><b class="btn"><svg class="ic"><use href="#g-eye"/></svg></b><b class="btn"><svg class="ic"><use href="#g-arrow"/></svg></b><b class="btn"><svg class="ic"><use href="#g-rot"/></svg></b><b class="btn"><svg class="ic"><use href="#g-pen"/></svg></b>
<i class="grip g2"></i>
<b class="btn"><svg class="ic"><use href="#globeadd"/></svg></b><b class="btn"><svg class="ic"><use href="#globesearch"/></svg></b><b class="btn"><svg class="ic"><use href="#globebino"/></svg></b>
<i class="grip g2"></i>
<b class="btn"><svg class="ic"><use href="#python"/></svg></b><b class="btn"><svg class="ic"><use href="#sat"/></svg></b>
<i class="grip g2"></i>
<b class="btn"><svg class="ic"><use href="#help"/></svg></b>
<i class="grip g2"></i>
<b class="btn"><svg class="ic"><use href="#topo"/></svg></b>
</div>

<div class="tb tb3">
<i class="grip"></i>
<b class="btn"><svg class="ic"><use href="#select"/></svg></b><i class="arr"></i><b class="btn"><svg class="ic"><use href="#selattr"/></svg></b><i class="arr"></i><b class="btn"><svg class="ic"><use href="#desel"/></svg></b><i class="arr"></i><b class="btn"><svg class="ic"><use href="#selloc"/></svg></b>
</div>

<main class="main">
<aside class="lefttb">
<i class="vgrip"></i>
<div class="lrow"><b class="lbtn"><svg class="ic"><use href="#vadd"/></svg></b></div>
<div class="lrow"><b class="lbtn"><svg class="ic"><use href="#raster"/></svg></b></div>
<div class="lrow"><b class="lbtn"><svg class="ic"><use href="#meshtri"/></svg></b></div>
<div class="lrow"><b class="lbtn"><svg class="ic"><use href="#comma"/></svg></b></div>
<div class="lrow"><b class="lbtn"><svg class="ic"><use href="#featheradd"/></svg></b></div>
<div class="lrow"><b class="lbtn"><svg class="ic"><use href="#meshadd"/></svg></b></div>
<div class="lrow"><b class="lbtn"><svg class="ic"><use href="#pg"/></svg></b><i class="arr"></i></div>
<div class="lrow"><b class="lbtn"><svg class="ic"><use href="#wms"/></svg></b><i class="arr"></i></div>
<div class="lrow"><b class="lbtn"><svg class="ic"><use href="#xyz"/></svg></b></div>
<div class="lrow"><b class="lbtn"><svg class="ic"><use href="#wfs"/></svg></b><i class="arr"></i></div>
<div class="lrow"><b class="lbtn"><svg class="ic"><use href="#vnew"/></svg></b><i class="arr"></i></div>
<div class="lrow lrow-t"><b class="lbtn"><svg class="ic"><use href="#tableadd"/></svg></b></div>
</aside>

<section class="layers">
<div class="dock-title"><span>Camadas</span><span class="dock-btns"><svg class="dbtn"><use href="#float"/></svg><svg class="dbtn"><use href="#close"/></svg></span></div>
<div class="dock-tools dt-l">
<svg class="ts"><use href="#style2"/></svg><svg class="ts"><use href="#addgroup"/></svg><svg class="ts"><use href="#eye"/></svg><svg class="ts"><use href="#funnel"/></svg><svg class="ts"><use href="#epsilon"/></svg><i class="arr"></i><svg class="ts"><use href="#expand"/></svg><svg class="ts"><use href="#collapse"/></svg><svg class="ts"><use href="#removelayer"/></svg>
</div>
<div class="layer-tree">
<div class="layer-row">
<span class="chk"><svg viewBox="0 0 16 16"><path d="M3.500 8l3 5 6-11" fill="none" stroke="#000" stroke-width="2"/></svg></span>
<span class="swatch"></span>
<span class="layer-name">limites_estaduais</span>
</div>
</div>
<div class="tabs"><span class="tab tab-on">Camadas</span><span class="tab">Navegador</span></div>
</section>

<section class="canvas">
<svg class="map" viewBox="319 172 1337 838">
<defs><filter id="rough" filterUnits="userSpaceOnUse" x="319" y="172" width="1337" height="838"><feTurbulence type="fractalNoise" baseFrequency=".2" numOctaves="2" seed="4"/><feDisplacementMap in="SourceGraphic" scale="3" xChannelSelector="R" yChannelSelector="G"/></filter></defs>
<g filter="url(#rough)">
<path class="land" d="M1158 295L1173 307L1178 311L1183 318L1190 318L1197 320L1200 326L1208 326L1215 323L1237 349L1237 364L1246 367L1252 364L1257 362L1263 363L1265 366L1268 365L1272 369L1277 373L1283 372L1288 375L1294 376L1298 381L1302 383L1305 388L1310 389L1312 396L1309 401L1307 405L1301 410L1298 414L1295 419L1292 422L1285 423L1284 430L1282 433L1285 439L1279 440L1273 438L1269 442L1267 447L1266 455L1265 462L1262 469L1266 475L1270 480L1274 483L1277 487L1281 494L1281 498L1277 503L1303 530L1298 543L1296 555L1295 587L1287 607L1272 615L1268 623L1265 630L1258 645L1251 655L1246 665L1238 668L1231 675L1226 682L1222 687L1213 698L1207 713L1208 743L1190 750L1168 757L1158 765L1154 770L1152 780L1157 783L1148 794L1135 791L1122 790L1095 788L1097 778L1098 771L1091 773L1086 777L1089 785L1091 788L1083 788L1070 792L1064 787L1059 782L1050 781L1044 784L1037 787L1032 786L1029 780L1023 784L1016 785L1011 793L1018 798L1018 803L1009 802L1003 803L997 803L991 805L985 812L982 813L975 816L972 818L972 828L966 828L962 827L955 824L948 822L942 823L936 825L932 830L926 836L918 837L909 840L900 846L890 852L887 858L875 866L860 875L852 880L844 887L841 893L839 898L830 906L827 898L826 893L824 887L820 885L817 888L813 888L810 892L806 885L809 878L811 870L805 866L797 865L788 864L780 863L773 864L772 855L776 849L778 843L772 835L768 828L763 820L761 812L763 797L764 783L762 776L759 767L753 762L747 755L738 756L733 754L725 755L715 755L705 753L703 745L694 741L684 737L678 733L669 734L660 733L652 731L645 727L639 724L635 732L627 728L618 728L608 726L599 725L594 726L589 728L590 722L605 711L621 705L625 697L630 688L637 680L645 672L645 663L650 659L655 653L657 640L663 634L669 630L670 613L678 603L686 593L694 592L701 590L704 578L704 553L709 547L715 540L718 532L725 526L732 522L740 508L747 497z"/>
<path class="border" d="M705 577L715 572L725 568L732 562L739 568L751 569L757 572L764 574L775 574L783 573L790 575L793 578L794 592L798 598L802 598L807 589L811 607L813 607L814 592L832 591L846 590L848 586L853 592L861 592L863 587L866 592L869 585L877 585L881 588L890 585L893 592L897 598L894 615L902 622L903 630L897 635L895 643L900 657L903 665L905 674L913 674L921 673L928 678L928 692L920 700L920 712L916 717L920 720L914 730L916 738L922 742L928 747L928 767L940 768L953 765L960 765L958 757L965 751L967 755L978 756L984 756L992 751L1001 747L1013 744L1020 741L1028 738L1036 739L1045 738L1055 733L1064 730L1076 731L1088 730L1098 730L1099 735L1120 725L1144 718L1140 713L1147 700L1150 690L1154 677L1162 672L1168 670L1172 663L1176 647L1176 637L1181 630L1200 631L1207 617L1214 612L1215 602L1223 596L1229 590L1231 577L1229 563L1224 556L1218 550L1222 548L1234 552L1233 540L1231 530L1225 527L1229 513L1238 511L1246 512L1243 502L1252 502L1260 499L1268 501L1276 503"/>
<path class="border" d="M1172 663L1176 683L1183 688L1190 692L1200 694L1213 698"/>
<path class="border" d="M1012 745L1018 758L1028 758L1037 759L1041 765L1038 771L1033 775L1020 776L1011 778L1006 785L1002 793L1004 799L1007 803"/>
</g>
</svg>
</section>

<aside class="tools">
<div class="dock-title"><span>Caixa de Ferramentas de proces...</span><span class="dock-btns"><svg class="dbtn"><use href="#float"/></svg><svg class="dbtn"><use href="#close"/></svg></span></div>
<div class="dock-tools dt-r">
<svg class="ts"><use href="#algs"/></svg><svg class="ts"><use href="#pydrop"/></svg><svg class="ts"><use href="#clock"/></svg><svg class="ts"><use href="#docgrey"/></svg><i class="vs"></i><svg class="ts"><use href="#editsel"/></svg><i class="vs"></i><svg class="ts"><use href="#wrench"/></svg>
</div>
<div class="searchbox"><svg class="sm"><use href="#mag"/></svg><span>Buscar...</span></div>
<ul class="tool-tree">
<li><i class="tw"></i><svg class="ti"><use href="#clock"/></svg>Usado recentemente</li>
<li><i class="tw"></i><svg class="ti"><use href="#qgis"/></svg>Análise de dados Raster</li>
<li><i class="tw"></i><svg class="ti"><use href="#qgis"/></svg>Análise de rede</li>
<li><i class="tw"></i><svg class="ti"><use href="#qgis"/></svg>Análise vetorial</li>
<li><i class="tw"></i><svg class="ti"><use href="#qgis"/></svg>Banco de dados</li>
<li><i class="tw"></i><svg class="ti"><use href="#qgis"/></svg>Cartografia</li>
<li><i class="tw"></i><svg class="ti"><use href="#qgis"/></svg>Criação de raster</li>
<li><i class="tw"></i><svg class="ti"><use href="#qgis"/></svg>Criação de vetor</li>
<li><i class="tw"></i><svg class="ti"><use href="#qgis"/></svg>Ferramentas de arquivo</li>
<li><i class="tw"></i><svg class="ti"><use href="#qgis"/></svg>Ferramentas de camada</li>
<li><i class="tw"></i><svg class="ti"><use href="#qgis"/></svg>Ferramentas raster</li>
<li><i class="tw"></i><svg class="ti"><use href="#qgis"/></svg>Geometria do vetor</li>
<li><i class="tw"></i><svg class="ti"><use href="#qgis"/></svg>Interpolar</li>
<li><i class="tw"></i><svg class="ti"><use href="#qgis"/></svg>Malha</li>
<li><i class="tw"></i><svg class="ti"><use href="#qgis"/></svg>Mosaico vetor</li>
<li><i class="tw"></i><svg class="ti"><use href="#qgis"/></svg>Plotar</li>
<li><i class="tw"></i><svg class="ti"><use href="#qgis"/></svg>Raster de análise do terreno</li>
<li><i class="tw"></i><svg class="ti"><use href="#qgis"/></svg>Selecionar vetor</li>
<li><i class="tw"></i><svg class="ti"><use href="#qgis"/></svg>Sobreposição de vetor</li>
<li><i class="tw"></i><svg class="ti"><use href="#qgis"/></svg>Tabela de vetores</li>
<li><i class="tw"></i><svg class="ti"><use href="#qgis"/></svg>Vetor geral</li>
<li><i class="tw"></i><svg class="ti"><use href="#gdal"/></svg>GDAL</li>
<li><i class="tw"></i><svg class="ti"><use href="#grass"/></svg>GRASS</li>
<li><i class="tw"></i><svg class="ti"><use href="#saga"/></svg>SAGA</li>
</ul>
</aside>
</main>

<footer class="status">
<div class="locator"><svg class="sm"><use href="#mag"/></svg><span>Escreva para localizar (Ctrl+K)</span></div>
<span class="pronto">Pronto</span>
<span class="st-fill"></span>
<span class="lbl l-coord">Coordenada</span><span class="field f-coord">1153631,2142995</span>
<svg class="st-ic st-wand"><use href="#wand"/></svg>
<span class="lbl l-esc">Escala</span><span class="field f-scale">1:9062066<i class="arr off"></i></span>
<svg class="st-ic st-lock"><use href="#lock"/></svg>
<span class="lbl l-lupa">Lupa</span><span class="field f-mag">100%<i class="spin"></i></span>
<span class="lbl l-rot">Rotação</span><span class="field f-rot">0,0 °<i class="spin"></i></span>
<span class="chk chk-s"><svg viewBox="0 0 16 16"><path d="M3.500 8l3 5 6-11" fill="none" stroke="#000" stroke-width="2"/></svg></span>
<span class="lbl l-rend">Renderizar</span>
<svg class="st-ic st-crs"><use href="#crs"/></svg><span class="lbl l-crs">ESRI:102033</span>
<svg class="st-ic st-msg"><use href="#msg"/></svg>
</footer>
</div>

<div class="menu menu-vetor">
<div class="row"><span class="row-t"><u>B</u>atch GPS Importer</span><i class="sub"></i></div>
<div class="row"><svg class="row-i"><use href="#topo"/></svg><span class="row-t">Verificador de topologia</span></div>
<div class="row"><span class="row-t"><u>G</u>eoprocessamento</span><i class="sub"></i></div>
<div class="row"><span class="row-t">G<u>e</u>ometrias</span><i class="sub"></i></div>
<div class="row"><span class="row-t"><u>A</u>nalisar</span><i class="sub"></i></div>
<div class="row row-on"><span class="row-t"><u>I</u>nvestigar</span><i class="sub"></i></div>
<div class="row"><span class="row-t">Ge<u>r</u>enciar dados</span><i class="sub"></i></div>
</div>

<div class="menu menu-inv">
<div class="row row-on"><svg class="row-i"><use href="#ic-grid"/></svg><span class="row-t">Criar grade...</span></div>
<div class="row"><svg class="row-i"><use href="#ic-extent"/></svg><span class="row-t">Extrair a extensão da camada...</span></div>
<div class="row"><svg class="row-i"><use href="#ic-dots"/></svg><span class="row-t">Pontos aleatórios na extensão...</span></div>
<div class="row"><svg class="row-i"><use href="#ic-rpoly"/></svg><span class="row-t">Random points in polygons...</span></div>
<div class="row"><svg class="row-i"><use href="#ic-rlines"/></svg><span class="row-t">Pontos aleatórios nas linhas...</span></div>
<div class="row"><svg class="row-i"><use href="#selloc"/></svg><span class="row-t">Selecionar por localização...</span></div>
<div class="row"><svg class="row-i"><use href="#ic-dots"/></svg><span class="row-t">Pontos aleatórios nas bordas da camada...</span></div>
<div class="row"><svg class="row-i"><use href="#ic-pipoly"/></svg><span class="row-t">Pontos aleatórios no interior dos polígonos...</span></div>
<div class="row"><svg class="row-i"><use href="#selrand"/></svg><span class="row-t">Seleção aleatória...</span></div>
<div class="row"><svg class="row-i"><use href="#selrand"/></svg><span class="row-t">Seleção aleatória dentro de subconjuntos...</span></div>
<div class="row"><svg class="row-i"><use href="#ic-reg"/></svg><span class="row-t">Pontos regulares...</span></div>
</div>
</body>
</html>
```
FILE: styles.css
```css
* { box-sizing: border-box; }
html, body { margin: 0; padding: 0; height: 100%; overflow: hidden; }
body { font: 14px "Noto Sans", "Open Sans", sans-serif; color: #000; background: #f0f0f0; position: relative; }
.sprite { display: block; height: 0; }
.app { display: flex; flex-direction: column; width: 1920px; height: 1042px; }
b, i { font: inherit; display: block; }

.svgt { font: 13px "Liberation Sans", sans-serif; fill: #333; }
.svgi { font: italic bold 14px "Liberation Serif", serif; fill: #fff; }
.svgT { font: 15px "Liberation Serif", serif; fill: #333; }
.svgb { font: bold 8px "Liberation Sans", sans-serif; fill: #222; }
.svgw { font: bold 7.5px "Liberation Sans", sans-serif; fill: #fff; }
.svgg { font: bold 7.5px "Liberation Sans", sans-serif; fill: #bdb9ad; }
.svgq { font: bold 13px "Liberation Sans", sans-serif; fill: #fff; }
.svgp { font: bold 10px "Liberation Sans", sans-serif; fill: #5e8ba5; }
.svge { font: 20px "Liberation Serif", serif; fill: #77407a; }
.svgd { font: bold 7.4px "Liberation Sans", sans-serif; fill: #111; }

.titlebar { height: 29px; background: #fff; display: flex; align-items: center; flex: none; }
.i-logo { width: 20px; height: 20px; margin-left: 2px; }
.title-text { margin-left: 5px; font-size: 14px; }
.winctl { margin-left: auto; display: flex; padding-right: 3px; }
.wbtn { width: 58px; height: 29px; display: block; }

.menubar { height: 25px; flex: none; display: flex; align-items: center; padding-left: 4px; background: #f0f0f0; }
.mi { padding: 0 5px; margin: 0 2.5px; line-height: 25px; white-space: nowrap; }
.mi:nth-child(4), .mi:nth-child(5) { margin-left: 3.5px; }
.mi:nth-child(12) { margin-left: 3.5px; }
.mi:nth-child(13) { margin-left: 1.5px; }
.mi-on { background: #0078d7; color: #fff; padding: 0 4px; margin: 0 3.5px; }

.tb { height: 39px; flex: none; display: flex; align-items: center; background: #f1f1f1; border-bottom: 1px solid #bdbdbd; overflow: hidden; }
.tb3 { border-bottom: 2px solid #bdbdbd; padding-top: 1px; }
.btn { width: 33px; height: 33px; flex: none; display: flex; align-items: center; justify-content: center; border: 1px solid transparent; border-radius: 3px; }
.btn.on { background: #dcdcdc; border-color: #b5b5b5; }
.ic { width: 24px; height: 24px; display: block; }
.grip { width: 14.5px; height: 22px; flex: none; background-image: radial-gradient(#b8b8b8 .7px, transparent .8px); background-size: 3px 3px; background-position: 6px 0; background-repeat: repeat-y; }
.g2 { width: 18px; background-position: 8px 0; background-size: 3px 3px; }
.g3 { width: 17px; background-position: 10px 0; }
.sep { width: 8px; height: 22px; flex: none; background: linear-gradient(#d5d5d5, #d5d5d5) center / 1px 100% no-repeat; }
.sep-w { width: 10px; }
.arr { width: 15px; height: 6px; flex: none; background: #555; clip-path: polygon(3px 0, 12px 0, 7.5px 6px); }
.arr.off { background: #b3b3b3; }
.sp-a { width: 231px; flex: none; }
.sp-b { width: 256px; flex: none; }

.main { flex: 1; display: flex; min-height: 0; }
.lefttb { width: 54px; flex: none; display: flex; flex-direction: column; background: linear-gradient(90deg, #fafafa, #ebebeb); }
.vgrip { height: 11px; flex: none; margin: 3px 18px 0 20px; background-image: radial-gradient(#c0c0c0 .7px, transparent .8px); background-size: 3px 3px; }
.lrow { height: 32px; flex: none; display: flex; align-items: center; padding-left: 8px; }
.lrow .arr { margin-left: 3px; }
.lbtn { width: 24px; height: 24px; display: block; }
.lrow-t { padding-left: 15px; }

.layers { width: 258px; flex: none; display: flex; flex-direction: column; border-left: 2px solid #b9b9b9; }
.dock-title { height: 22px; flex: none; display: flex; align-items: center; justify-content: space-between; padding: 0 0 1px 3px; }
.dock-btns { display: flex; gap: 3px; padding-right: 2px; }
.dbtn { width: 12px; height: 12px; display: block; }
.dock-tools { height: 28px; flex: none; display: flex; align-items: center; padding-bottom: 2px; }
.ts { width: 18px; height: 18px; flex: none; display: block; }
.dt-l { padding-left: 6px; gap: 7px; }
.dt-l .arr { margin: 0 -2.5px 0 -5.5px; }
.layer-tree { flex: 1; width: 255px; background: #fff; border: 1px solid #a9a9a9; }
.layer-row { height: 22px; background: #0078d7; display: flex; align-items: center; padding-left: 27px; }
.chk { width: 17px; height: 17px; flex: none; background: #fff; border: 1px solid #777; display: flex; }
.chk svg { width: 15px; height: 15px; display: block; }
.swatch { width: 18px; height: 18px; margin-left: 6px; flex: none; background: #9da56b; border: 1px solid #3d4a4a; }
.layer-name { margin-left: 6px; color: #fff; font-weight: 700; text-decoration: underline; }
.tabs { height: 30px; flex: none; display: flex; padding-top: 1px; }
.tab { height: 26px; width: 90px; background: #dcdcdc; border: 1px solid #bcbcbc; border-top-color: #d0d0d0; border-radius: 0 0 3px 3px; text-align: center; line-height: 25px; font-size: 13px; }
.tab-on { width: 83px; height: 28px; background: #fafafa; line-height: 28px; }

.canvas { width: 1339px; margin-left: 6px; flex: none; background: #fff; border-left: 1px solid #a9a9a9; border-top: 1px solid #a9a9a9; }
.map { display: block; width: 1337px; height: 838px; }
.land { fill: #e3b334; stroke: #333; stroke-width: 1.1; }
.border { fill: none; stroke: #2b2b2b; stroke-width: 1.4; }

.tools { width: 263px; flex: none; display: flex; flex-direction: column; padding-left: 7px; }
.tools .dock-title { padding-left: 4px; white-space: nowrap; }
.tools .dock-btns { padding-right: 1px; }
.dt-r { padding-left: 7px; gap: 7px; }
.vs { width: 1px; height: 14px; background: #d0d0d0; flex: none; }
.searchbox { height: 25px; flex: none; margin-top: 1px; padding-bottom: 2px; background: #fff; border: 1px solid #b5b5b5; border-radius: 3px; display: flex; align-items: center; padding-left: 9px; color: #7a7a7a; font-size: 13px; gap: 7px; }
.sm { width: 18px; height: 18px; flex: none; display: block; }
.tool-tree { flex: 1; margin: 0; padding: 0; list-style: none; background: #fff; border: 1px solid #b5b5b5; }
.tool-tree li { height: 22px; display: flex; align-items: center; white-space: nowrap; padding-left: 9px; }
.tw { width: 0; height: 0; flex: none; border-left: 6px solid #666; border-top: 5px solid transparent; border-bottom: 5px solid transparent; }
.ti { width: 20px; height: 20px; margin: 0 6px 0 13px; flex: none; display: block; }

.status { height: 32px; flex: none; display: flex; align-items: center; background: #f0f0f0; font-size: 12px; }
.locator { width: 309px; height: 25px; margin-left: 5px; background: #fff; border: 1px solid #b5b5b5; border-radius: 3px; display: flex; align-items: center; padding-left: 9px; gap: 6px; color: #7a7a7a; font-size: 12.6px; }
.pronto { margin-left: 9px; }
.st-fill { flex: 1; }
.lbl { white-space: nowrap; flex: none; }
.field { height: 25px; flex: none; background: #fff; border: 1px solid #b5b5b5; border-radius: 3px; display: flex; align-items: center; padding-left: 5px; margin-left: 3px; white-space: nowrap; }
.l-coord { width: 69px; }
.f-coord { width: 116px; }
.st-ic { width: 20px; height: 20px; flex: none; display: block; }
.st-wand { margin: 0 0 0 6px; }
.l-esc { width: 36px; margin-left: 12px; }
.f-scale { width: 92px; }
.f-scale .arr { margin-left: auto; }
.st-lock { margin: 0 7px 0 11px; }
.l-lupa { width: 27px; }
.f-mag { width: 92px; }
.l-rot { width: 52px; margin-left: 10px; }
.f-rot { width: 88px; }
.spin { width: 11px; height: 17px; margin-left: auto; margin-right: 3px; background: #777; clip-path: path("M5.5 0L11 7H0zM0 10h11l-5.500 7z"); }
.chk-s { margin-left: 8px; }
.l-rend { width: 70px; margin-left: 5px; }
.st-crs { width: 18px; height: 18px; margin-left: 6px; }
.l-crs { width: 74px; margin-left: 5px; }
.st-msg { margin: 0 6px 0 24px; width: 22px; height: 22px; }

.menu { position: absolute; background: #fff; border: 1px solid #a0a0a0; box-shadow: 3px 3px 3px rgba(0,0,0,.4); }
.menu-vetor { left: 471px; top: 53px; width: 277px; }
.menu-inv { left: 747px; top: 194px; width: 412px; }
.row { height: 28px; display: flex; align-items: center; position: relative; padding-left: 32px; white-space: nowrap; }
.menu-inv .row { padding-bottom: 2px; }
.menu-inv .row:last-child { height: 26px; padding-bottom: 0; }
.row-on { background: #0078d7; color: #fff; box-shadow: inset 0 0 0 1px #3aa0ee; }
.row-i { position: absolute; left: 6px; top: 4px; width: 20px; height: 20px; }
.sub { width: 0; height: 0; margin-left: auto; margin-right: 5px; border-left: 5px solid #555; border-top: 5px solid transparent; border-bottom: 5px solid transparent; }
.row-on .sub { border-left-color: #cfe6fa; }
```
